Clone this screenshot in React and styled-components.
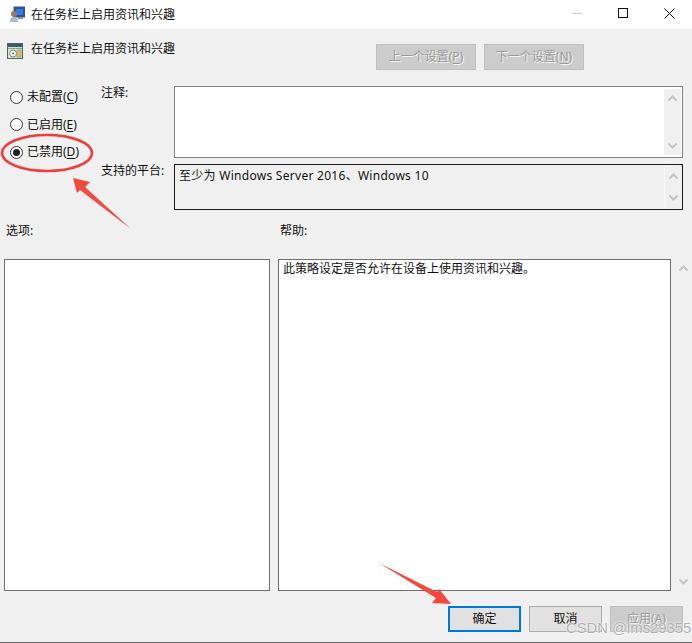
import React from 'react'
import styled, { createGlobalStyle } from 'styled-components'

const GlobalStyle = createGlobalStyle`
    html, body {
        margin: 0;
        padding: 0;
        background: #f0f0f0;
    }
    * {
        box-sizing: border-box;
    }
`

const Page = styled.div`
    position: relative;
    width: 692px;
    height: 643px;
    display: flex;
    flex-direction: column;
    overflow: hidden;
    background: #f0f0f0;
    border-bottom: 1px solid #666;
    color: #111;
    font-family: 'Noto Sans', 'Noto Sans CJK SC', sans-serif;
    font-size: 12px;
    line-height: 16px;
`

const TitleBar = styled.div`
    height: 29px;
    flex: none;
    display: flex;
    align-items: center;
    padding-left: 9px;
    background: #fff;
`

const TitleText = styled.span`
    margin-left: 6px;
`

const WindowControls = styled.div`
    margin-left: auto;
    display: flex;
    margin-top: -3px;
`

const WindowControl = styled.div`
    width: 46px;
    height: 20px;
    display: flex;
    align-items: center;
    justify-content: center;
`

const SettingHeader = styled.div`
    height: 57px;
    flex: none;
    display: flex;
    align-items: flex-start;
    padding: 14px 108px 0 7px;
`

const SettingTitle = styled.span`
    margin-left: 8px;
    margin-top: -2px;
`

const NavButtons = styled.div`
    margin-left: auto;
    margin-top: 1px;
    display: flex;
    gap: 8px;
`

const NavButton = styled.div`
    width: 100px;
    height: 26px;
    display: flex;
    align-items: center;
    justify-content: center;
    background: #cccccc;
    border: 1px solid #bfbfbf;
    color: #9a9a9a;
    text-shadow: 1px 1px 0 #f4f4f4;
`

const SettingsGrid = styled.div`
    display: grid;
    flex: none;
    grid-template-columns: 101px 73px 509px;
    grid-template-rows: 72px 46px;
    row-gap: 6px;
`

const RadioGroup = styled.div`
    grid-row: 1 / span 2;
    display: flex;
    flex-direction: column;
    gap: 5.5px;
    padding-left: 10px;
`

const RadioRow = styled.div`
    height: 22px;
    display: flex;
    align-items: center;
    gap: 4px;
`

const RadioCircle = styled.span`
    width: 13px;
    height: 13px;
    border-radius: 50%;
    border: 1px solid #333;
    background: #fff;
    display: flex;
    align-items: center;
    justify-content: center;

    &::after {
        content: '';
        width: 7px;
        height: 7px;
        border-radius: 50%;
        background: ${(p) => (p.$checked ? '#222' : 'transparent')};
    }
`

const Key = styled.span`
    text-decoration: underline;
    text-underline-offset: 2px;
`

const FieldLabel = styled.div`
    margin-top: -1px;
`

const FieldBox = styled.div`
    display: flex;
    justify-content: space-between;
    padding: 2px 1px 2px 4px;
    border: 1px solid ${(p) => (p.$dark ? '#1a1a1a' : '#808080')};
    background: ${(p) => (p.$dark ? '#f0f0f0' : '#fff')};
`

const PlatformText = styled.span`
    margin-top: 1px;
    letter-spacing: 0.28px;
`

const ScrollTrack = styled.div`
    width: 17px;
    flex: none;
    display: flex;
    flex-direction: column;
    justify-content: space-between;
    align-items: center;
    padding: 6px 0;
    background: #f0f0f0;
    border-left: ${(p) => (p.$light ? '1px solid #fafafa' : 'none')};
`

const SectionLabels = styled.div`
    display: grid;
    flex: none;
    grid-template-columns: 274px 1fr;
    padding: 13px 0 0 6px;
    height: 49px;
`

const PanelGrid = styled.div`
    display: grid;
    flex: none;
    grid-template-columns: 266px 393px 17px;
    column-gap: 8px;
    height: 332px;
    margin-left: 4px;
`

const Panel = styled.div`
    background: #fff;
    border: 1px solid #6f6f6f;
    padding: 1px 4px;
`

const HelpScroll = styled.div`
    margin-left: -8px;
    display: flex;
    flex-direction: column;
    justify-content: space-between;
    align-items: center;
    padding: 6px 0;
`

const Footer = styled.div`
    display: flex;
    flex: none;
    justify-content: flex-end;
    gap: 8px;
    padding: 15px 9px 0 0;
`

const DialogButton = styled.div`
    width: 73px;
    height: 26px;
    display: flex;
    align-items: center;
    justify-content: center;
    background: ${(p) => (p.$disabled ? '#cccccc' : '#e1e1e1')};
    border: ${(p) => (p.$primary ? '2px solid #0078d7' : `1px solid ${p.$disabled ? '#bfbfbf' : '#adadad'}`)};
    color: ${(p) => (p.$disabled ? '#9a9a9a' : '#111')};
    text-shadow: ${(p) => (p.$disabled ? '1px 1px 0 #f4f4f4' : 'none')};
`

const Markup = styled.svg`
    position: absolute;
    inset: 0;
    pointer-events: none;
`

const Watermark = styled.div`
    position: absolute;
    left: 566px;
    top: 620px;
    font-family: 'Liberation Sans', sans-serif;
    font-size: 14.8px;
    line-height: 16px;
    color: rgba(150, 150, 150, 0.75);
    text-shadow: 0 0 1px #fff, 0 0 2px #fff;
    white-space: nowrap;
`

const Chevron = ({ down }) => (
    <svg width="11" height="7" viewBox="0 0 11 7" fill="none" stroke="#c4c4c4" strokeWidth="2">
        <path d={down ? 'M1.5 1.5 5.5 5.5 9.5 1.5' : 'M1.5 5.5 5.5 1.5 9.5 5.5'} />
    </svg>
)

const ComputerIcon = () => (
    <svg width="16" height="17" viewBox="0 0 16 17">
        <rect x="5" y="1" width="11" height="10" fill="#2a4fa8" stroke="#47566e" />
        <rect x="7" y="3" width="7" height="6" fill="#2f7fe6" />
        <rect x="9" y="11" width="5" height="2" fill="#8b93a3" />
        <circle cx="5" cy="8" r="3" fill="#9a7a5c" />
        <path d="M1 16c0-4 1.5-5 4-5s4 1 4 5z" fill="#a9b9d0" />
    </svg>
)

const PolicyIcon = () => (
    <svg width="16" height="16" viewBox="0 0 16 16">
        <rect x="0.5" y="0.5" width="15" height="15" fill="#dfe3d4" stroke="#4f6464" />
        <rect x="1" y="1" width="14" height="3" fill="#3f5a68" />
        <rect x="1" y="5" width="14" height="1" fill="#8da0a0" />
        <circle cx="6" cy="10.5" r="3.5" fill="#f5f5ee" stroke="#7a8a80" />
        <circle cx="6" cy="10.5" r="1" fill="#55666a" />
        <rect x="10" y="7" width="4" height="7" fill="#d9c36a" stroke="#8c8a5a" strokeWidth="0.6" />
    </svg>
)

const App = () => {
    return (
        <Page>
            <GlobalStyle />
            <TitleBar>
                <ComputerIcon />
                <TitleText>在任务栏上启用资讯和兴趣</TitleText>
                <WindowControls>
                    <WindowControl>
                        <svg width="10" height="10" viewBox="0 0 10 10">
                            <path d="M0 5.5h10" stroke="#c8c8c8" />
                        </svg>
                    </WindowControl>
                    <WindowControl>
                        <svg width="10" height="10" viewBox="0 0 10 10" fill="none">
                            <rect x="0.5" y="0.5" width="9" height="9" stroke="#111" />
                        </svg>
                    </WindowControl>
                    <WindowControl>
                        <svg width="11" height="11" viewBox="0 0 11 11" fill="none">
                            <path d="M0.5 0.5l10 10M10.5 0.5l-10 10" stroke="#111" />
                        </svg>
                    </WindowControl>
                </WindowControls>
            </TitleBar>

            <SettingHeader>
                <PolicyIcon />
                <SettingTitle>在任务栏上启用资讯和兴趣</SettingTitle>
                <NavButtons>
                    <NavButton><span>上一个设置(<Key>P</Key>)</span></NavButton>
                    <NavButton><span>下一个设置(<Key>N</Key>)</span></NavButton>
                </NavButtons>
            </SettingHeader>

            <SettingsGrid>
                <RadioGroup>
                    <RadioRow><RadioCircle /><span>未配置(<Key>C</Key>)</span></RadioRow>
                    <RadioRow><RadioCircle /><span>已启用(<Key>E</Key>)</span></RadioRow>
                    <RadioRow><RadioCircle $checked /><span>已禁用(<Key>D</Key>)</span></RadioRow>
                </RadioGroup>
                <FieldLabel>注释:</FieldLabel>
                <FieldBox>
                    <span />
                    <ScrollTrack>
                        <Chevron />
                        <Chevron down />
                    </ScrollTrack>
                </FieldBox>
                <FieldLabel>支持的平台:</FieldLabel>
                <FieldBox $dark>
                    <PlatformText>至少为 Windows Server 2016、Windows 10</PlatformText>
                    <ScrollTrack $light>
                        <Chevron />
                        <Chevron down />
                    </ScrollTrack>
                </FieldBox>
            </SettingsGrid>

            <SectionLabels>
                <span>选项:</span>
                <span>帮助:</span>
            </SectionLabels>

            <PanelGrid>
                <Panel />
                <Panel>此策略设定是否允许在设备上使用资讯和兴趣。</Panel>
                <HelpScroll>
                    <Chevron />
                    <Chevron down />
                </HelpScroll>
            </PanelGrid>

            <Footer>
                <DialogButton $primary>确定</DialogButton>
                <DialogButton>取消</DialogButton>
                <DialogButton $disabled><span>应用(<Key>A</Key>)</span></DialogButton>
            </Footer>

            <Markup width="692" height="643" viewBox="0 0 692 643">
                <ellipse cx="47" cy="153" rx="45" ry="18" fill="none" stroke="#f23c3c" strokeWidth="2.6" />
                <polygon points="73,178 90,182 85,187 131,229 80,190 77,193" fill="#f4483c" />
                <polygon points="379,563 437,592 439,589 451,604 432,603 436,598" fill="#f4483c" />
            </Markup>
            <Watermark>CSDN @lms29355</Watermark>
        </Page>
    )
}

export default App
